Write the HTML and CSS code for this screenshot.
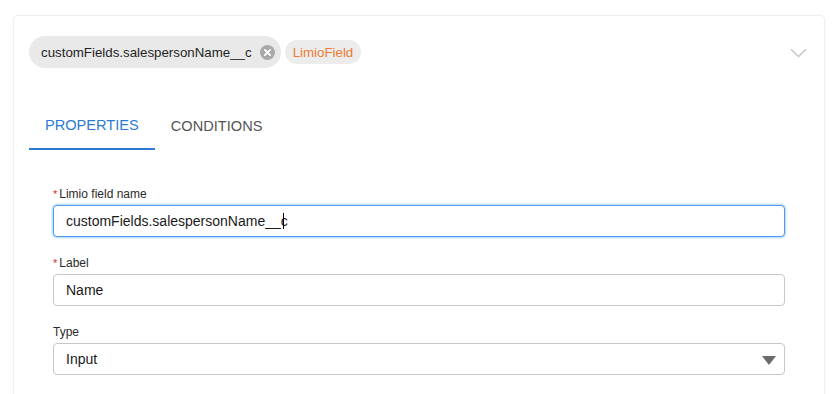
FILE: index.html
```html
<!DOCTYPE html>
<html>
<head>
<meta charset="utf-8">
<link rel="stylesheet" href="styles.css">
</head>
<body>
<div class="card">
  <div class="card-header">
    <div class="chips">
      <span class="chip chip-main">
        <span class="chip-text">customFields.salespersonName__c</span>
        <span class="chip-close">
          <svg width="15" height="15" viewBox="0 0 16 16"><circle cx="8" cy="8" r="8" fill="#a9a9a9"/><path d="M5.2 5.2L10.8 10.8M10.8 5.2L5.2 10.8" stroke="#fff" stroke-width="1.9" stroke-linecap="round"/></svg>
        </span>
      </span>
      <span class="chip chip-type">LimioField</span>
    </div>
    <svg class="chevron" width="17" height="10" viewBox="0 0 17 10"><path d="M1 1.2L8.5 8.5L16 1.2" fill="none" stroke="#c6c6c6" stroke-width="1.5"/></svg>
  </div>
  <div class="tabs">
    <div class="tab tab-active">PROPERTIES</div>
    <div class="tab">CONDITIONS</div>
  </div>
  <div class="form">
    <div class="field">
      <label class="label"><span class="req">*</span>Limio field name</label>
      <div class="input input-focus">customFields.salespersonName__c<span class="caret"></span></div>
    </div>
    <div class="field">
      <label class="label"><span class="req">*</span>Label</label>
      <div class="input">Name</div>
    </div>
    <div class="field">
      <label class="label">Type</label>
      <div class="input select">Input<span class="triangle"></span></div>
    </div>
  </div>
</div>
</body>
</html>
```

FILE: styles.css
```css
html, body {
  margin: 0;
  background: #ffffff;
}
body {
  padding: 15px 7px 0 13px;
  font-family: "Liberation Sans", Arial, sans-serif;
  color: #1a1a1a;
  height: 394px;
  box-sizing: border-box;
  overflow: hidden;
}
.card {
  border: 1px solid #efefef;
  border-radius: 5px;
  box-shadow: 0 0 3px rgba(0, 0, 0, 0.04);
  background: #fff;
  padding-bottom: 40px;
}
.card-header {
  display: flex;
  align-items: center;
  justify-content: space-between;
  padding: 20px 17px 0 15px;
}
.chips {
  display: flex;
  align-items: center;
  gap: 4px;
}
.chip {
  display: inline-flex;
  align-items: center;
  background: #e9e9e9;
  box-sizing: border-box;
}
.chip-main {
  height: 32px;
  border-radius: 16px;
  padding: 0 6px 0 12px;
  font-size: 13.3px;
  color: #1f1f1f;
}
.chip-close {
  display: inline-flex;
  margin-left: 8px;
}
.chip-type {
  height: 24px;
  border-radius: 12px;
  padding: 0 8px;
  font-size: 13.3px;
  color: #ea7a35;
  background: #ececec;
}
.chevron {
  display: block;
  margin-top: 2px;
}
.tabs {
  display: flex;
  margin: 34px 0 0 15px;
}
.tab {
  height: 48px;
  line-height: 48px;
  padding: 0 16px;
  font-size: 14.6px;
  color: #555555;
  box-sizing: border-box;
}
.tab-active {
  color: #2b7bd3;
  border-bottom: 2px solid #2b7bd3;
  line-height: 46px;
}
.form {
  padding: 35px 39px 0 39px;
}
.field {
  margin-bottom: 17px;
}
.label {
  display: block;
  font-size: 12px;
  line-height: 18px;
  margin-bottom: 2px;
  color: #2a2a2a;
}
.req {
  color: #d9302c;
  font-size: 11px;
  margin-right: 2px;
}
.input {
  position: relative;
  height: 32px;
  box-sizing: border-box;
  border: 1px solid #c8c8c8;
  border-radius: 4px;
  padding: 0 12px;
  font-size: 14px;
  line-height: 30px;
  color: #1a1a1a;
  background: #fff;
}
.input-focus {
  border-color: #4c9cf2;
  box-shadow: 0 0 2px 1px rgba(76, 156, 242, 0.45);
}
.caret {
  display: inline-block;
  width: 1px;
  height: 16px;
  background: #000;
  vertical-align: -3px;
  margin-left: -5px;
}
.triangle {
  position: absolute;
  right: 8px;
  top: 12px;
  width: 0;
  height: 0;
  border-left: 7px solid transparent;
  border-right: 7px solid transparent;
  border-top: 9px solid #6b6b6b;
}
```
